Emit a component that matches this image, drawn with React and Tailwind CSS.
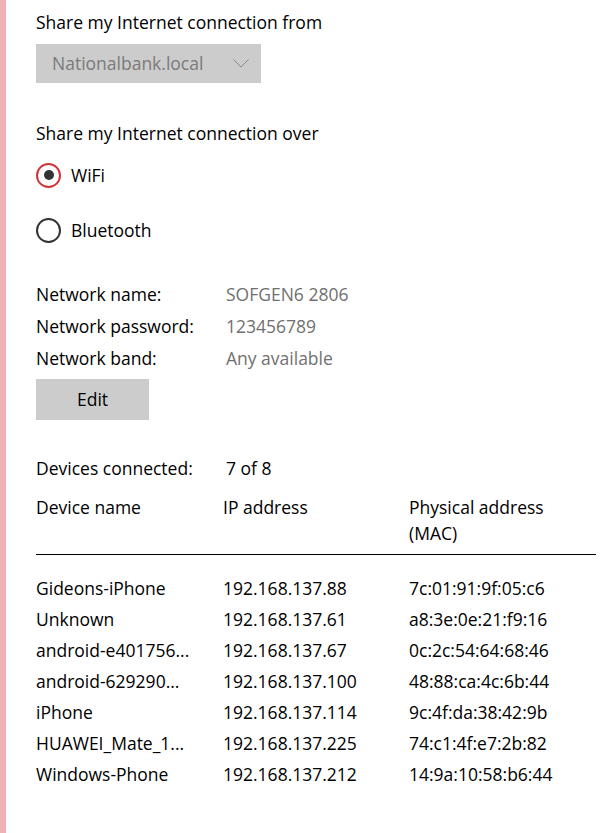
import React from 'react';

const devices = [
  { name: 'Gideons-iPhone', ip: '192.168.137.88', mac: '7c:01:91:9f:05:c6' },
  { name: 'Unknown', ip: '192.168.137.61', mac: 'a8:3e:0e:21:f9:16' },
  { name: 'android-e401756...', ip: '192.168.137.67', mac: '0c:2c:54:64:68:46' },
  { name: 'android-629290...', ip: '192.168.137.100', mac: '48:88:ca:4c:6b:44' },
  { name: 'iPhone', ip: '192.168.137.114', mac: '9c:4f:da:38:42:9b' },
  { name: 'HUAWEI_Mate_1...', ip: '192.168.137.225', mac: '74:c1:4f:e7:2b:82' },
  { name: 'Windows-Phone', ip: '192.168.137.212', mac: '14:9a:10:58:b6:44' },
];

const networkInfo = [
  ['Network name:', 'SOFGEN6 2806'],
  ['Network password:', '123456789'],
  ['Network band:', 'Any available'],
];

const Radio = ({ checked, label, className = '' }) => (
  <div className={`flex items-center h-[24px] ${className}`}>
    <span
      className={`flex items-center justify-center w-[25px] h-[25px] rounded-full border-2 ${
        checked ? 'border-[#d13438]' : 'border-[#333333]'
      }`}
    >
      {checked && <span className="w-[10px] h-[10px] rounded-full bg-[#333333]" />}
    </span>
    <span className="ml-[10px]">{label}</span>
  </div>
);

export default function App() {
  return (
    <div
      className="flex min-h-[833px] bg-white text-black text-[17.5px]"
      style={{ fontFamily: '"Open Sans", "Noto Sans", sans-serif' }}
    >
      <div className="w-[6px] shrink-0 bg-[#f0b1b5]" />
      <div className="flex-1 pl-[30px] pr-[16px]">
        {/* Share from */}
        <div className="mt-[12px] leading-[20px]">Share my Internet connection from</div>
        <div className="mt-[12px] flex items-center justify-between w-[225px] h-[39px] bg-[#cccccc] pl-[16px] pr-[12px] text-[#7a7a7a]">
          <span>Nationalbank.local</span>
          <svg width="16" height="9" viewBox="0 0 16 9" fill="none">
            <path d="M0.5 0.5l7.5 7.5 7.5-7.5" stroke="#888888" strokeWidth="1" />
          </svg>
        </div>

        {/* Share over */}
        <div className="mt-[40px] leading-[20px]">Share my Internet connection over</div>
        <Radio checked label="WiFi" className="mt-[20px]" />
        <Radio label="Bluetooth" className="mt-[31px]" />

        {/* Network info */}
        <div className="mt-[36px]">
          {networkInfo.map(([k, v]) => (
            <div key={k} className="flex items-center h-[32px]">
              <span className="w-[190px]">{k}</span>
              <span className="text-[#707070]">{v}</span>
            </div>
          ))}
        </div>
        <button className="mt-[5px] w-[113px] h-[41px] bg-[#cccccc] text-black">Edit</button>

        {/* Devices */}
        <div className="mt-[38px] flex leading-[20px]">
          <span className="w-[190px]">Devices connected:</span>
          <span>7 of 8</span>
        </div>
        <div className="mt-[16px] grid grid-cols-[187px_186px_1fr] leading-[26px]">
          <span>Device name</span>
          <span>IP address</span>
          <span>
            Physical address
            <br />
            (MAC)
          </span>
        </div>
        <div className="mt-[8px] border-t border-black" />
        <div className="mt-[18px]">
          {devices.map((d) => (
            <div key={d.mac} className="grid grid-cols-[187px_186px_1fr] items-center h-[31px]">
              <span>{d.name}</span>
              <span>{d.ip}</span>
              <span>{d.mac}</span>
            </div>
          ))}
        </div>
      </div>
    </div>
  );
}
